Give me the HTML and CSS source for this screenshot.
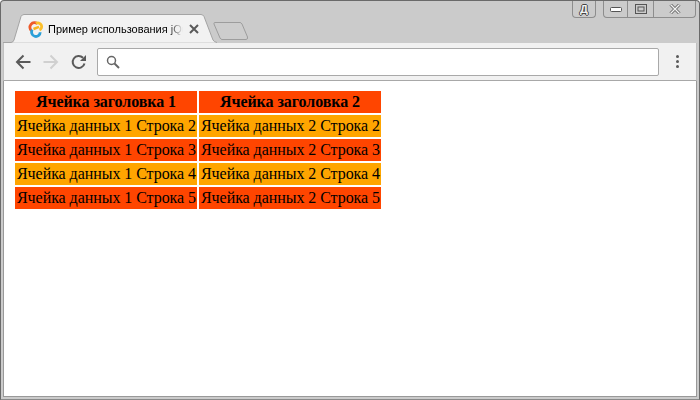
FILE: index.html
```html
<!DOCTYPE html>
<html lang="ru">
<head>
<meta charset="utf-8">
<title>Пример использования jQuery</title>
<link rel="stylesheet" href="styles.css">
</head>
<body>
<div class="window">
  <div class="titlebar">
    <div class="tabstrip">
      <div class="tab">
        <svg class="tab-shape" width="214" height="29" viewBox="0 0 214 29"><path d="M0 28.500H8Q10 28.500 11 26L18 2.500Q19 .5 21 .5H198Q200 .5 201 2.500L210 26Q211 28 214 28.500" fill="#f2f2f2" stroke="#a4a4a4"/></svg>
        <svg class="favicon" width="18" height="18" viewBox="0 0 18 18" fill="none" stroke-width="2.800"><path d="M4.500 10.800A4.600 4.600 0 1 1 10.500 3.800" stroke="#ee5a2a"/><path d="M9 3.500A3.700 3.700 0 1 1 12.500 10" stroke="#fbbf2a"/><path d="M5.300 9.800A4.300 4.300 0 1 0 13.200 12.200" stroke="#2a9fd8"/><path d="M6.500 9L12 6.800" stroke="#f7b41e" stroke-width="2.500"/></svg>
        <span class="tab-title">Пример использования jQuery</span>
        <svg class="tab-close" width="10" height="10" viewBox="0 0 10 10"><path d="M1 1L9 9M9 1L1 9" stroke="#5a5a5a" stroke-width="2"/></svg>
      </div>
      <svg class="newtab" width="36" height="18" viewBox="0 0 36 18"><path d="M1.500 .5H27Q28 .5 29 2L34.500 15Q35 17.500 33 17.500H9Q8 17.500 7 16L1 2Q.8 .5 1.500 .5Z" fill="#cdcdcd" stroke="#9d9d9d"/></svg>
    </div>
    <div class="winbuttons">
      <div class="winbtn lang"><span class="lang-glyph">Д</span></div>
      <div class="wingroup">
        <div class="winbtn min"><svg width="12" height="5" viewBox="0 0 12 5"><rect x=".5" y=".5" width="11" height="4" rx="1" fill="#fff" stroke="#555"/></svg></div>
        <div class="winbtn max"><svg width="12" height="10" viewBox="0 0 12 10"><rect x=".5" y=".5" width="11" height="9" fill="none" stroke="#555"/><rect x="3" y="3" width="6" height="4" fill="none" stroke="#555" stroke-width="1"/></svg></div>
        <div class="winbtn close"><svg width="12" height="10" viewBox="0 0 12 10"><path d="M1.500 .5L10.500 9.500M10.500 .5L1.500 9.500" stroke="#666" stroke-width="3"/><path d="M1.500 .5L10.500 9.500M10.500 .5L1.500 9.500" stroke="#f4f4f4" stroke-width="1.300"/></svg></div>
      </div>
    </div>
  </div>
  <div class="toolbar">
    <svg class="navicon" width="16" height="16" viewBox="0 0 16 16"><path d="M15.500 8H2M8.500 1.500L2 8L8.500 14.500" fill="none" stroke="#5a5a5a" stroke-width="2"/></svg>
    <svg class="navicon" width="16" height="16" viewBox="0 0 16 16"><path d="M.5 8H14M7.500 1.500L14 8L7.500 14.500" fill="none" stroke="#d0d0d0" stroke-width="2"/></svg>
    <svg class="navicon" width="16" height="16" viewBox="0 0 16 16"><path d="M13.500 9.500A6 6 0 1 1 12 3.800" fill="none" stroke="#5a5a5a" stroke-width="2"/><path d="M15 1V7H9Z" fill="#5a5a5a"/></svg>
    <div class="omnibox">
      <svg width="14" height="14" viewBox="0 0 14 14"><circle cx="5.500" cy="5.500" r="4" fill="none" stroke="#666" stroke-width="1.500"/><path d="M8.500 8.500L13 13" stroke="#666" stroke-width="2"/></svg>
    </div>
    <div class="menu"><i></i><i></i><i></i></div>
  </div>
  <div class="content">
    <table class="data">
      <tr class="red"><th>Ячейка заголовка 1</th><th>Ячейка заголовка 2</th></tr>
      <tr class="amber"><td>Ячейка данных 1 Строка 2</td><td>Ячейка данных 2 Строка 2</td></tr>
      <tr class="red"><td>Ячейка данных 1 Строка 3</td><td>Ячейка данных 2 Строка 3</td></tr>
      <tr class="amber"><td>Ячейка данных 1 Строка 4</td><td>Ячейка данных 2 Строка 4</td></tr>
      <tr class="red"><td>Ячейка данных 1 Строка 5</td><td>Ячейка данных 2 Строка 5</td></tr>
    </table>
  </div>
</div>
</body>
</html>
```
FILE: styles.css
```css
* { box-sizing: border-box; }
html, body { margin: 0; height: 100%; }
body { width: 700px; height: 400px; overflow: hidden; background: #fff; }
.window {
  height: 400px; display: flex; flex-direction: column;
  background: #cbcbcb; border: 1px solid #6a6a6a; border-bottom-color: #8a8a8a;
  border-radius: 4px 4px 0 0; padding: 0 2px 2px 2px;
}
.titlebar { height: 42px; flex: none; display: flex; justify-content: space-between; }
.tabstrip { display: flex; align-items: flex-end; }
.tab { position: relative; width: 214px; height: 29px; display: flex; align-items: center; padding: 0 0 0 24px; }
.tab-shape { position: absolute; left: 0; top: 0; }
.favicon { position: relative; flex: none; margin-top: 1px; }
.tab-title {
  position: relative; width: 135px; margin-left: 3px; white-space: nowrap; overflow: hidden;
  font: 11px "Liberation Sans", Arial, sans-serif; color: #000;
  -webkit-mask-image: linear-gradient(to right, #000 120px, transparent 135px);
  mask-image: linear-gradient(to right, #000 120px, transparent 135px);
}
.tab-close { position: relative; flex: none; margin-left: 6px; }
.newtab { margin: 0 0 3px -4px; flex: none; }
.winbuttons { display: flex; align-items: flex-start; gap: 7px; padding-right: 1px; }
.winbtn {
  height: 17px; display: flex; align-items: center; justify-content: center;
  border: 1px solid #8d8d8d; border-top: 0; border-radius: 0 0 4px 4px; background: #cbcbcb;
}
.lang { width: 24px; }
.lang-glyph {
  font: bold 11px "Liberation Sans", Arial, sans-serif; color: #f4f4f4;
  text-shadow: 1px 0 #444, -1px 0 #444, 0 1px #444, 0 -1px #444;
}
.wingroup { display: flex; }
.wingroup .winbtn { border-radius: 0; border-left: 0; }
.min { width: 25px; border-left: 1px solid #8d8d8d !important; border-radius: 0 0 0 4px !important; }
.max { width: 26px; }
.close { width: 42px; border-radius: 0 0 4px 0 !important; }
.toolbar {
  height: 38px; flex: none; display: flex; align-items: center;
  background: #f1f1f1; border: 1px solid #c0c0c0; border-top: 0; border-bottom: 1px solid #a8a8a8;
  padding: 0 0 0 11px;
}
.navicon { flex: none; margin-right: 12px; }
.navicon + .navicon + .navicon { margin-right: 10px; }
.omnibox {
  width: 562px; height: 28px; flex: none; display: flex; align-items: center; padding-left: 8px;
  background: #fff; border: 1px solid #a9a9a9; border-radius: 2px;
}
.menu { display: flex; flex-direction: column; gap: 2px; margin-left: 17px; }
.menu i { display: block; width: 3px; height: 3px; background: #5a5a5a; border-radius: 50%; }
.content { flex: 1; background: #fff; padding: 8px 9px; border-left: 1px solid #999; border-right: 1px solid #999; border-bottom: 1px solid #999; }
.data { border-spacing: 2px; border-collapse: separate; table-layout: fixed; width: 370px; font: 16px "Liberation Serif", "Times New Roman", serif; color: #000; letter-spacing: -.06px; }
.data th, .data td { padding: 2px 2px; height: 22px; line-height: 18px; white-space: nowrap; }
.red th, .red td { background: #ff4500; }
.amber td { background: #ffa500; }
```
